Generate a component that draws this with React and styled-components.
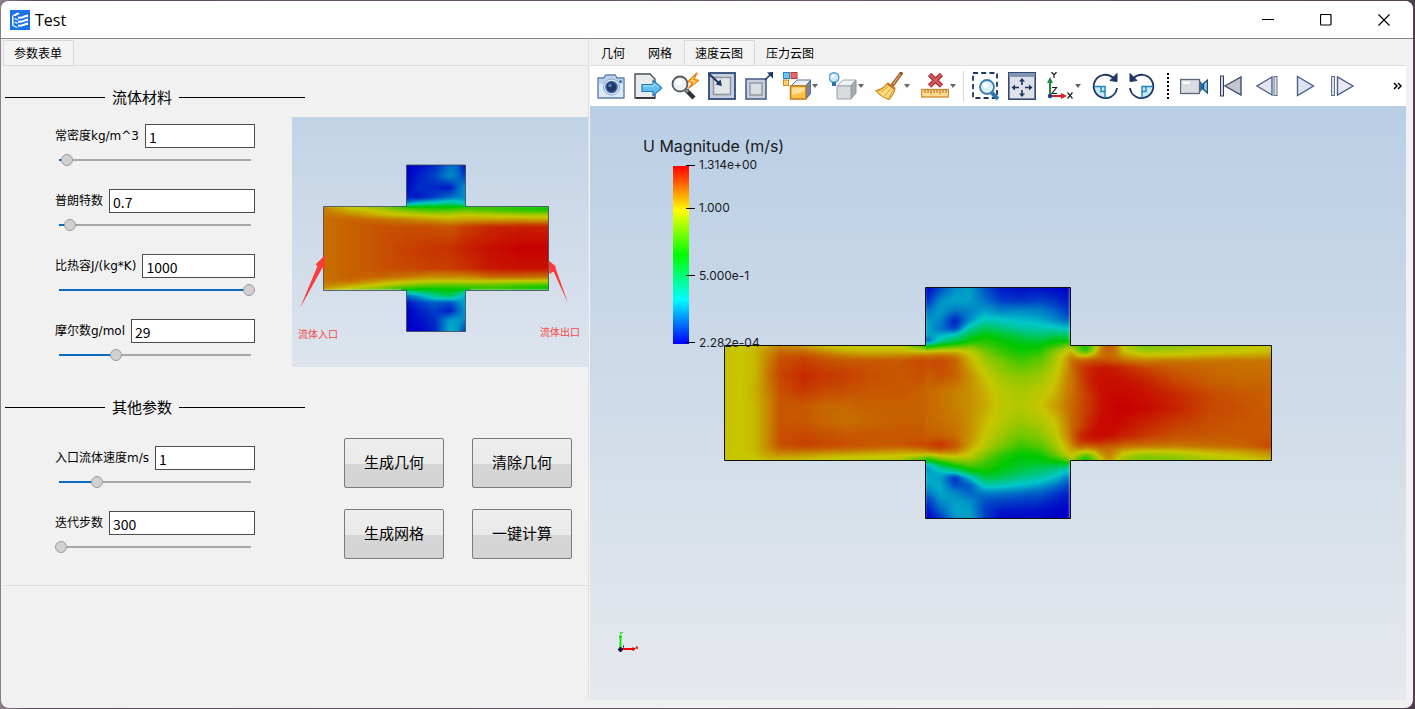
import React from "react";
import styled, { createGlobalStyle } from "styled-components";

const CJK = '"Noto Sans CJK SC", sans-serif';

const GlobalStyle = createGlobalStyle`
  *, *::before, *::after { box-sizing: border-box; }
  html, body, #root { height: 100%; }
  body { margin: 0; font: 12px/16px ${CJK}; color: #000; }
  button, input { font: inherit; color: inherit; margin: 0; }
`;

const Desktop = styled.div`
  min-height: 100%;
  display: flex;
  padding: 1px 2px 1px 1px;
  background: linear-gradient(90deg, #8d7c8c 0, #5b4a5e 30px, #6c5a6c 60%, #50404f 100%);
`;

const Window = styled.div`
  flex: 1;
  min-width: 0;
  display: flex;
  flex-direction: column;
  background: #f1f1f1;
  border-radius: 8px;
  overflow: hidden;
`;

const TitleBar = styled.header`
  display: flex;
  align-items: center;
  height: 38px;
  padding-left: 9px;
  background: #fff;
  border-bottom: 1px solid #84848c;
`;

const WindowTitle = styled.h1`
  flex: 1;
  margin: 0 0 0 5px;
  font: 400 16px/24px "Open Sans", sans-serif;
`;

const WindowButton = styled.button`
  width: 58px;
  height: 36px;
  padding: 0;
  border: 0;
  background: none;
  display: grid;
  place-items: center;
`;

const Body = styled.main`
  flex: 1;
  display: flex;
  padding: 0 7px 8px 2px;
`;

const FormColumn = styled.section`
  flex: 0 0 586px;
  min-width: 0;
  display: flex;
  flex-direction: column;
  border-right: 1px solid #e0e0e0;
`;

const ViewColumn = styled.section`
  flex: 1;
  min-width: 0;
  display: flex;
  flex-direction: column;
  padding-left: 1px;
`;

const TabList = styled.div`
  display: flex;
  height: 27px;
  padding-top: 1px;
  border-bottom: 1px solid #e0e0e0;
`;

const Tab = styled.button`
  height: 26px;
  padding: 0 11px 0 10px;
  border: 1px solid ${(p) => (p.$active ? "#d9d9d9" : "transparent")};
  background: ${(p) => (p.$active ? "#f3f3f3" : "transparent")};
  line-height: 22px;
`;

const Form = styled.form`
  border-bottom: 1px solid #e0e0e0;
  height: 520px;
`;

const SectionTitle = styled.h2`
  display: grid;
  grid-template-columns: 100px 60px 126px;
  column-gap: 7px;
  align-items: center;
  margin: 0;
  padding: ${(p) => (p.$first ? "19px" : "28px")} 0 8px 2px;
  font: 400 15px/24px ${CJK};

  &::before, &::after { content: ""; height: 1px; background: #000; }
`;

const SectionBody = styled.div`
  display: flex;
`;

const FieldList = styled.div`
  flex: 0 0 289px;
  min-width: 0;
  display: flex;
  flex-direction: column;
  gap: 21px;
  padding: ${(p) => p.$top} 37px 0 52px;
`;

const FieldRow = styled.div`
  display: flex;
  align-items: center;
  gap: 6px;
  height: 24px;
`;

const FieldLabel = styled.label`
  flex: none;
  font: 12px/24px "DejaVu Sans", ${CJK};
`;

const TextInput = styled.input`
  flex: 1;
  width: 0;
  min-width: 0;
  height: 24px;
  padding: 1px 3px 0;
  border: 1px solid #4c4c4c;
  border-radius: 0;
  background: #fff;
  font-size: 14px;
  line-height: 20px;
`;

const Slider = styled.input`
  display: block;
  appearance: none;
  width: 100%;
  height: 12px;
  margin: 6px 0 2px;
  background: linear-gradient(90deg, #0a6cc0 ${(p) => p.defaultValue}%, #a8a8a8 ${(p) => p.defaultValue}%)
    center / calc(100% - 8px) 2px no-repeat;

  &::-webkit-slider-thumb {
    appearance: none;
    width: 12px;
    height: 12px;
    border: 1px solid #9c9c9c;
    border-radius: 50%;
    background: #d0d0d0;
  }
`;

const ButtonGrid = styled.div`
  display: grid;
  grid-template-columns: 100px 100px;
  align-content: start;
  gap: 21px 28px;
  padding: 11px 0 0 52px;
`;

const PushButton = styled.button`
  height: 50px;
  padding: 0 0 2px;
  border: 1px solid #7b7b7b;
  border-radius: 2px;
  background: linear-gradient(#eeeeee, #e9e9e9 52%, #d6d6d6 52%, #d3d3d3);
  font-size: 15px;
`;

const Toolbar = styled.div`
  display: flex;
  align-items: center;
  height: 40px;
  padding: 0 4px 0 2px;
  background: #fff;
`;

const ToolButton = styled.button`
  flex: none;
  display: flex;
  align-items: center;
  justify-content: center;
  gap: 1px;
  width: ${(p) => (p.$menu ? "46px" : "37px")};
  height: 36px;
  padding: 0;
  border: 0;
  background: none;
`;

const Divider = styled.span`
  flex: none;
  width: 1px;
  height: 30px;
  margin: 0 2px;
  background: #d8d8d8;
`;

const Grip = styled.span`
  flex: none;
  height: 26px;
  margin: 0 6px 0 7px;
  border-left: 2px dotted #000;
`;

const Overflow = styled.button`
  margin-left: auto;
  padding: 0;
  border: 0;
  background: none;
  display: grid;
`;

const Viewport = styled.div`
  flex: 1;
  display: flex;
  background: linear-gradient(#b9cee5, #e6e9ed);

  > svg { display: block; width: 100%; height: 100%; }
`;

const Preview = styled.svg`
  flex: none;
  display: block;
`;

/* ---------- scalar fields: values run from 0 (slow) to 100 (fast) ---------- */

const leftArm = {
  xs: [724, 740, 755, 768, 780, 803, 825, 847, 870, 900, 922],
  rows: [
    [345, 76, 74, 76, 79, 83, 80, 76, 74, 74, 74, 58],
    [350, 76, 75, 77, 82, 86, 86, 81, 77, 76, 76, 73],
    [355, 76, 75, 77, 83, 89, 90, 87, 84, 82, 83, 85],
    [360, 76, 75, 77, 84, 90, 92, 90, 89, 89, 89, 91],
    [375, 76, 75, 77, 85, 91, 95, 93, 92, 90, 89, 90],
    [390, 76, 75, 78, 84, 90, 93, 91, 90, 89, 89, 88],
    [405, 76, 75, 77, 83, 89, 89, 87, 87, 88, 88, 88],
    [420, 76, 75, 77, 83, 89, 89, 87, 86, 87, 88, 88],
    [435, 76, 75, 77, 83, 90, 91, 90, 89, 89, 89, 89],
    [445, 76, 75, 77, 83, 90, 92, 91, 90, 89, 89, 91],
    [450, 76, 75, 77, 82, 86, 87, 86, 85, 84, 82, 84],
    [455, 76, 74, 76, 79, 81, 80, 78, 77, 76, 75, 74],
    [460, 76, 74, 74, 77, 77, 76, 74, 73, 72, 72, 55],
  ],
};

const cavity = {
  xs: [926, 940, 955, 970, 985, 1000, 1020, 1040, 1055, 1069],
  rows: [
    [288, 0, 9, 18, 20, 10, 3, 2, 2, 1, 0],
    [300, 4, 18, 21, 20, 14, 8, 6, 8, 6, 3],
    [310, 14, 20, 15, 16, 20, 16, 17, 16, 12, 6],
    [320, 20, 17, 3, 18, 28, 26, 24, 22, 18, 12],
    [328, 22, 14, 7, 30, 40, 36, 30, 28, 27, 24],
    [335, 20, 22, 28, 43, 49, 46, 40, 36, 40, 38],
    [341, 8, 30, 42, 52, 55, 51, 46, 44, 50, 50],
    [345, 40, 52, 58, 62, 58, 53, 49, 50, 55, 65],
    [350, 72, 75, 76, 73, 64, 57, 51, 53, 66, 76],
    [355, 85, 86, 84, 76, 68, 60, 54, 58, 70, 80],
    [360, 90, 91, 88, 78, 70, 65, 58, 62, 71, 82],
    [375, 88, 90, 88, 82, 75, 70, 67, 69, 74, 84],
    [390, 87, 86, 84, 82, 78, 73, 71, 73, 77, 85],
    [405, 87, 86, 84, 82, 79, 74, 72, 75, 80, 86],
    [420, 87, 86, 85, 82, 77, 73, 70, 72, 76, 85],
    [435, 88, 88, 86, 82, 75, 70, 64, 67, 73, 84],
    [445, 91, 94, 90, 80, 73, 66, 58, 61, 70, 80],
    [450, 86, 88, 86, 77, 70, 61, 53, 56, 67, 78],
    [455, 70, 76, 77, 74, 65, 56, 50, 51, 61, 74],
    [460, 46, 60, 68, 68, 60, 53, 48, 48, 52, 62],
    [465, 18, 38, 52, 60, 56, 51, 45, 42, 42, 38],
    [470, 18, 24, 34, 50, 53, 48, 41, 37, 32, 25],
    [477, 22, 20, 5, 24, 42, 40, 33, 29, 24, 15],
    [485, 20, 22, 9, 11, 28, 27, 24, 20, 15, 8],
    [492, 14, 21, 17, 12, 16, 16, 14, 12, 8, 4],
    [500, 6, 18, 20, 18, 10, 9, 8, 7, 4, 2],
    [510, 1, 12, 21, 20, 8, 3, 3, 2, 1, 0],
    [518, 0, 6, 18, 20, 8, 1, 1, 1, 0, 0],
  ],
};

const rightArm = {
  xs: [1072, 1079, 1086, 1094, 1101, 1109, 1117, 1124, 1145, 1175, 1210, 1240, 1271],
  rows: [
    [345, 68, 60, 50, 66, 84, 89, 84, 72, 63, 66, 70, 72, 75],
    [350, 76, 62, 54, 72, 84, 88, 84, 75, 69, 71, 73, 74, 76],
    [355, 82, 76, 75, 80, 86, 87, 85, 80, 76, 76, 78, 79, 80],
    [360, 86, 88, 89, 90, 90, 89, 88, 86, 84, 85, 85, 86, 85],
    [367, 86, 91, 94, 96, 97, 97, 96, 95, 91, 88, 87, 86, 86],
    [380, 85, 90, 94, 97, 98, 98, 98, 98, 96, 91, 88, 87, 87],
    [395, 86, 89, 92, 95, 98, 99, 99, 99, 98, 95, 91, 89, 88],
    [408, 87, 90, 92, 95, 98, 99, 100, 100, 99, 96, 91, 90, 88],
    [425, 87, 90, 94, 97, 99, 99, 99, 98, 95, 92, 90, 89, 89],
    [435, 87, 94, 97, 99, 99, 99, 97, 96, 93, 90, 89, 89, 89],
    [440, 86, 92, 95, 96, 96, 95, 94, 92, 90, 88, 88, 88, 90],
    [446, 82, 88, 87, 88, 89, 88, 87, 86, 85, 84, 86, 87, 91],
    [451, 78, 77, 75, 77, 84, 85, 82, 77, 74, 75, 78, 80, 84],
    [456, 75, 66, 58, 68, 78, 84, 78, 72, 66, 68, 73, 76, 80],
    [460, 72, 56, 48, 62, 74, 82, 74, 67, 64, 66, 70, 73, 77],
  ],
};

const previewDuct = {
  xs: [323, 350, 380, 406, 430, 450, 466, 490, 520, 548],
  rows: [
    [206, 84, 74, 66, 52, 49, 48, 52, 55, 52, 51],
    [210, 85, 78, 74, 66, 60, 60, 64, 60, 56, 54],
    [214, 86, 83, 77, 74, 72, 72, 74, 72, 70, 70],
    [219, 86, 88, 86, 84, 81, 79, 80, 80, 80, 79],
    [226, 86, 88, 90, 90, 90, 89, 92, 95, 96, 96],
    [248, 86, 88, 90, 92, 93, 94, 96, 98, 100, 100],
    [268, 86, 88, 90, 91, 92, 92, 94, 97, 98, 98],
    [277, 86, 88, 87, 85, 82, 82, 82, 86, 86, 85],
    [281, 86, 86, 80, 76, 74, 74, 75, 74, 73, 73],
    [285, 84, 79, 74, 66, 62, 60, 60, 62, 58, 56],
    [290, 80, 70, 60, 48, 45, 48, 50, 52, 50, 44],
  ],
};

const previewTop = {
  xs: [406, 420, 435, 450, 458, 466],
  rows: [
    [165, 0, 2, 5, 14, 12, 0],
    [175, 0, 4, 9, 18, 14, 6],
    [187, 1, 6, 5, 3, 12, 20],
    [197, 4, 3, 8, 14, 16, 18],
    [202, 14, 22, 26, 30, 28, 22],
    [206, 36, 42, 45, 48, 45, 36],
  ],
};

const previewBottom = {
  xs: [406, 420, 435, 450, 458, 466],
  rows: [
    [290, 35, 42, 46, 50, 47, 36],
    [295, 14, 22, 34, 40, 30, 20],
    [302, 2, 8, 12, 10, 16, 22],
    [310, 0, 4, 8, 3, 12, 20],
    [320, 0, 2, 6, 20, 20, 16],
    [332, 0, 0, 4, 23, 18, 4],
  ],
};

const BLEED = 4;

function valuesAt(rows, y) {
  const last = rows[rows.length - 1];
  if (y <= rows[0][0]) return rows[0].slice(1);
  if (y >= last[0]) return last.slice(1);
  const i = rows.findIndex((r) => r[0] > y);
  const [y0, ...a] = rows[i - 1];
  const [y1, ...b] = rows[i];
  const t = (y - y0) / (y1 - y0);
  return a.map((v, k) => v + (b[k] - v) * t);
}

/* Horizontal grey strips; the speedColours filter turns grey into the rainbow scale. */
function ScalarField({ id, field, top = BLEED, bottom = BLEED, side = BLEED }) {
  const { xs, rows } = field;
  const x0 = xs[0] - side;
  const x1 = xs[xs.length - 1] + side;
  const strips = [];
  for (let y = rows[0][0] - top; y < rows[rows.length - 1][0] + bottom; y += 1) strips.push(y);
  return strips.map((y) => (
    <g key={y}>
      <linearGradient id={`${id}${y}`} gradientUnits="userSpaceOnUse" x1={xs[0]} x2={xs[xs.length - 1]} y1="0" y2="0">
        {valuesAt(rows, y).map((v, k) => {
          const g = Math.round(v * 2.55);
          return (
            <stop
              key={k}
              offset={(xs[k] - xs[0]) / (xs[xs.length - 1] - xs[0])}
              stopColor={`rgb(${g},${g},${g})`}
            />
          );
        })}
      </linearGradient>
      <rect x={x0} y={y} width={x1 - x0} height="1" fill={`url(#${id}${y})`} shapeRendering="crispEdges" />
    </g>
  ));
}

function SpeedColours({ id, x, y, width, height, blur }) {
  return (
    <filter id={id} filterUnits="userSpaceOnUse" x={x} y={y} width={width} height={height} colorInterpolationFilters="sRGB">
      <feGaussianBlur stdDeviation={blur} />
      <feComponentTransfer>
        <feFuncR type="table" tableValues="0 0 0 .784 .784" />
        <feFuncG type="table" tableValues="0 .784 .784 .784 0" />
        <feFuncB type="table" tableValues=".784 .784 0 0 0" />
      </feComponentTransfer>
    </filter>
  );
}

const CROSS = "M724.5 345.5H925.5V287.5H1070.5V345.5H1271.5V460.5H1070.5V518.5H925.5V460.5H724.5Z";
const PREVIEW_CROSS = "M323.5 206.5H406.5V165H465.5V206.5H548.5V290.5H465.5V331.5H406.5V290.5H323.5Z";

function ContourScene() {
  const ticks = [[166, "1.314e+00", 169], [209, "1.000", 212], [276, "5.000e-1", 280], [343, "2.282e-04", 347]];
  return (
    <svg viewBox="590 106 816 594" role="img" aria-label="速度云图">
      <defs>
        <SpeedColours id="sceneColours" x={710} y={275} width={580} height={255} blur={1.6} />
        <clipPath id="sceneClip"><path d={CROSS} /></clipPath>
        <linearGradient id="scale" x1="0" x2="0" y1="1" y2="0">
          <stop offset="0" stopColor="#00f" />
          <stop offset=".25" stopColor="#0ff" />
          <stop offset=".5" stopColor="#0f0" />
          <stop offset=".75" stopColor="#ff0" />
          <stop offset="1" stopColor="#f00" />
        </linearGradient>
      </defs>
      <g clipPath="url(#sceneClip)">
        <g filter="url(#sceneColours)">
          <ScalarField id="l" field={leftArm} />
          <ScalarField id="r" field={rightArm} />
          <ScalarField id="c" field={cavity} side={1} />
        </g>
      </g>
      <path d={CROSS} fill="none" stroke="#111" />
      <rect x="673" y="166" width="16" height="178" fill="url(#scale)" />
      <g fill="#1a1a1a" fontFamily="Inter, sans-serif">
        <text x="643" y="152" fontSize="16">U Magnitude (m/s)</text>
        {ticks.map(([y, label, base]) => (
          <g key={label}>
            <rect x="686" y={y - 1} width="9" height="1" fill="#000" />
            <text x="699" y={base} fontSize="12">{label}</text>
          </g>
        ))}
      </g>
      <path d="M620.5 649V635" stroke="#00f000" strokeWidth="2" />
      <path d="M619 637h3M620 632l1 2l2 -2" stroke="#00c800" fill="none" />
      <path d="M621 649H635" stroke="#f00" strokeWidth="2" />
      <path d="M633 647v4M635 648h3M637 646v3" stroke="#d00000" fill="none" />
      <path d="M618 649.5h5M620.5 647v5M623 646.5h1" stroke="#00004c" strokeWidth="2" />
    </svg>
  );
}

function FlowPreview() {
  return (
    <Preview width="296" height="250" viewBox="292 117 296 250" role="img" aria-label="流体入口与流体出口">
      <defs>
        <SpeedColours id="previewColours" x={315} y={155} width={245} height={185} blur={1.2} />
        <clipPath id="previewClip"><path d={PREVIEW_CROSS} /></clipPath>
        <linearGradient id="previewSky" x1="0" x2="0" y1="0" y2="1">
          <stop offset="0" stopColor="#c2d3e6" />
          <stop offset="1" stopColor="#dde4ed" />
        </linearGradient>
      </defs>
      <rect x="292" y="117" width="296" height="250" fill="url(#previewSky)" />
      <g clipPath="url(#previewClip)">
        <g filter="url(#previewColours)">
          <ScalarField id="pt" field={previewTop} bottom={0} />
          <ScalarField id="pb" field={previewBottom} top={0} />
          <ScalarField id="pd" field={previewDuct} top={0} bottom={0} />
        </g>
      </g>
      <path d={PREVIEW_CROSS} fill="none" stroke="#3c4650" strokeOpacity=".8" />
      <path d="M300 308L317.500 266L315.500 264.500L325 255V269L322.500 267.500Z" fill="#fb3a3a" />
      <path d="M568 303L553.500 271.500L549.500 274L548.500 260.500L555.500 266L555.500 268Z" fill="#fb3a3a" />
      <g fill="#f44848" fontSize="10" fontFamily="Noto Sans CJK SC, sans-serif">
        <text x="298" y="338">流体入口</text>
        <text x="540" y="336">流体出口</text>
      </g>
    </Preview>
  );
}

/* ---------- icons ---------- */

const NAVY = "#1c3562";

const icons = {
  camera: (
    <>
      <path d="M1 6h6l2-3h9l2 3h7v20H1z" fill="#dce9f7" stroke="#5a7fae" strokeWidth="1.400" strokeLinejoin="round" />
      <path d="M2 7h6l2-3h7l2 3h7v5H2z" fill="#b9d0ea" />
      <circle cx="14.500" cy="15" r="8" fill="#e8f0f9" stroke="#8aa6c9" />
      <circle cx="14.500" cy="15" r="5.600" fill="#1d3768" stroke="#3f6da5" strokeWidth="1.500" />
      <circle cx="13" cy="13.500" r="1.800" fill="#5f83b4" />
      <rect x="22.500" y="8.500" width="2" height="2" fill={NAVY} />
    </>
  ),
  exportScene: (
    <>
      <path d="M1 2h15l5 5v19H1z" fill="#e9ebed" stroke="#4b4f55" strokeWidth="1.400" />
      <path d="M2 26h19" stroke="#26282b" strokeWidth="1.600" />
      <path d="M8 12.500h11V8.500l9 7.500l-9 7.500v-4H8z" fill="#63bff0" stroke="#1c7ab9" strokeWidth="1.200" />
      <path d="M9 14h11v-2.500l5 4" fill="none" stroke="#b4e4fb" />
    </>
  ),
  magnifyFlash: (
    <>
      <path d="M15 18l8 8" stroke="#303236" strokeWidth="4.500" />
      <path d="M14 17l3 3" stroke="#8b9096" strokeWidth="2.500" />
      <circle cx="9" cy="12" r="7.500" fill="#eef1f3" stroke="#55595e" strokeWidth="1.800" />
      <circle cx="8" cy="10" r="3" fill="#fff" />
      <path d="M26 1l-9 8.500l4.500 .8l-4 6l10.500-8l-5-.8z" fill="#ffd36a" stroke="#ef7f10" strokeWidth="1.300" strokeLinejoin="round" />
    </>
  ),
  zoomIn: (
    <>
      <rect x="1" y="1" width="26" height="26" fill="#c5cfdd" stroke="#2f4a78" strokeWidth="1.800" />
      <rect x="5.500" y="5.500" width="17" height="17" fill="#e4e6e9" stroke="#9199a5" strokeWidth="1.600" />
      <path d="M1 2l11 10" stroke={NAVY} strokeWidth="2" />
      <path d="M14 14l-6.500-1.500l5-5z" fill={NAVY} />
    </>
  ),
  zoomOut: (
    <>
      <rect x="1" y="7" width="20" height="20" fill="#c8d0dc" stroke="#4a628c" strokeWidth="1.600" />
      <rect x="5" y="11" width="12" height="12" fill="#dcdfe3" stroke="#9199a5" strokeWidth="1.500" />
      <path d="M20 8l5-5" stroke={NAVY} strokeWidth="1.600" />
      <path d="M28 0v6.500l-6-6z" fill={NAVY} />
    </>
  ),
  colorCube: (
    <>
      <rect x="0.500" y="0.500" width="6" height="6" fill="#6cc4f0" stroke="#2b86bd" />
      <rect x="8" y="0.500" width="6" height="6" fill="#e06a6a" stroke="#b73a3f" />
      <rect x="0.500" y="8" width="5" height="5.500" fill="#ffd27a" stroke="#d98714" />
      <path d="M8 14l6-6h14l-5 6z" fill="#eef2f6" stroke="#5c7090" />
      <path d="M23 14l5-6v13l-5 6z" fill="#7387a5" stroke="#4b5f80" />
      <path d="M7.500 14H23v13H7.500z" fill="#fbc04b" stroke="#c67714" strokeWidth="1.400" />
      <path d="M9 15.500h12.500v4L9 23z" fill="#ffdf95" />
    </>
  ),
  lightCube: (
    <>
      <path d="M8 14l6-6h13l-5 6z" fill="#eef0f2" stroke="#a2abb5" />
      <path d="M22 14l5-6v13l-5 6z" fill="#a3abb5" stroke="#8a939e" />
      <path d="M8 14h14v13H8z" fill="#d7dbe0" stroke="#98a1ac" />
      <circle cx="5" cy="5.500" r="4.800" fill="#cdeafb" stroke="#4b9fd2" strokeWidth="1.400" />
      <path d="M3 10h4v4H3z" fill="#2e6f9f" />
      <circle cx="4" cy="4" r="1.500" fill="#fff" />
    </>
  ),
  broom: (
    <>
      <path d="M26 1.500l-8 11" stroke="#8c4a1e" strokeWidth="3.600" strokeLinecap="round" />
      <path d="M25.500 2l-7.500 10.500" stroke="#d99a5c" strokeWidth="1.600" />
      <path d="M13 11l7 5c0 4-3 8-6 11.500C9 26 4 22.500 1 18.500c5 0 8-3 12-7.500z" fill="#fcdc7c" stroke="#d08a1c" strokeWidth="1.200" />
      <path d="M13 15l-7 5M15.500 17l-6 7M18 18l-4 8" stroke="#dd9c2c" />
      <path d="M12.500 12l7 5" stroke="#c9692a" strokeWidth="1.600" />
    </>
  ),
  rulerDelete: (
    <>
      <rect x="0.500" y="17.500" width="27" height="7.500" fill="#ffd991" stroke="#cc8a2d" strokeWidth="1.300" />
      <path d="M4 18v3M7 18v3M10 18v4M13 18v3M16 18v3M19 18v4M22 18v3M25 18v3" stroke="#a8691c" />
      <path d="M8.500 2.500L20.500 14M20.500 2.500L8.500 14" stroke="#a02c34" strokeWidth="4.600" />
      <path d="M8.500 2.500L20.500 14M20.500 2.500L8.500 14" stroke="#d95a60" strokeWidth="2.400" />
    </>
  ),
  zoomBox: (
    <>
      <rect x="2" y="1" width="24" height="25" fill="none" stroke={NAVY} strokeWidth="1.800" strokeDasharray="5 3.200" />
      <path d="M20 20l7 7" stroke="#2c78ad" strokeWidth="4" />
      <circle cx="16" cy="15" r="7" fill="#d9effb" stroke="#3a7cab" strokeWidth="1.800" />
      <circle cx="14.500" cy="13" r="3" fill="#f6fcff" />
    </>
  ),
  fit: (
    <>
      <rect x="0.800" y="0.800" width="26.400" height="26.400" fill="#dde2ea" stroke="#34496f" strokeWidth="1.600" />
      <rect x="1" y="1" width="26" height="4" fill="#8294b3" />
      <path d="M14 8v5M14 18v5M5 15.500h6M17 15.500h6" stroke={NAVY} strokeWidth="1.600" />
      <path d="M14 6l3 3.500h-6zM14 25l3-3.500h-6zM3.500 15.500l3.500-3v6zM24.500 15.500l-3.500-3v6z" fill={NAVY} />
    </>
  ),
  axes: (
    <>
      <path d="M4 24V9" stroke="#238a3d" strokeWidth="2" />
      <path d="M4 5l3 6H1z" fill="#238a3d" />
      <path d="M4 24h12" stroke="#e02020" strokeWidth="2" />
      <path d="M21 24l-6-3v6z" fill="#e02020" />
      <circle cx="4" cy="24" r="2.200" fill="#1b3ba0" />
      <g fill="none" stroke="#222" strokeWidth="1.200">
        <path d="M5.500 0l2.500 3l2.500-3M8 3v3M6 15.500h4.500l-4.500 6h5M21.500 20.500l5 6M26.500 20.500l-5 6" />
      </g>
    </>
  ),
  rotateRight: (
    <>
      <path d="M14 14.500V26A11.500 11.500 0 0 1 3 14.500z" fill="#c8ebfb" />
      <path d="M22.500 6A11.700 11.700 0 1 0 26 16" fill="none" stroke={NAVY} strokeWidth="1.800" />
      <path d="M19 8.500L26 1.500V9.500z" fill={NAVY} stroke={NAVY} />
      <path d="M3 14.500h11V26M10 14.500v5h4" fill="none" stroke="#2387ba" strokeWidth="1.500" />
    </>
  ),
  rotateLeft: (
    <>
      <path d="M14 14.500V26A11.500 11.500 0 0 0 25 14.500z" fill="#c8ebfb" />
      <path d="M5.500 6A11.700 11.700 0 1 1 2 16" fill="none" stroke={NAVY} strokeWidth="1.800" />
      <path d="M9 8.500L2 1.500V9.500z" fill={NAVY} stroke={NAVY} />
      <path d="M25 14.500H14V26M18 14.500v5h-4" fill="none" stroke="#2387ba" strokeWidth="1.500" />
    </>
  ),
  video: (
    <>
      <rect x="0.500" y="7.500" width="19" height="14" fill="#d9dde3" stroke="#5b6679" strokeWidth="1.300" />
      <rect x="3" y="9.500" width="7" height="2.500" fill="#fff" />
      <path d="M20 9l3 3v5l-3 3z" fill="#2b6f9e" />
      <path d="M23.500 11.500l4-3.500v13l-4-3.500z" fill="#8fd0ef" stroke="#1d4f7a" strokeWidth="1.400" />
    </>
  ),
  first: (
    <>
      <rect x="3.500" y="4" width="3" height="20" fill="#d3d9e3" stroke="#2f3f63" />
      <path d="M24 5v18L8 14z" fill="#c3c7cd" stroke="#3f4f73" strokeWidth="1.400" />
    </>
  ),
  previous: (
    <>
      <path d="M18 5v18L3 14z" fill="#e3e7ed" stroke="#4f6286" strokeWidth="1.400" />
      <rect x="20" y="4.500" width="3" height="19" fill="#d9e1ea" stroke="#5f7192" />
    </>
  ),
  play: <path d="M6.500 4.500L22.500 14L6.500 23.500z" fill="#dce4f1" stroke="#4a5f8d" strokeWidth="1.400" />,
  next: (
    <>
      <rect x="3.500" y="4.500" width="3" height="19" fill="#d9e1ea" stroke="#5f7192" />
      <path d="M9.500 5v18L25 14z" fill="#e6eaf1" stroke="#4a5f8d" strokeWidth="1.400" />
    </>
  ),
};

function Tool({ icon, label, menu }) {
  return (
    <ToolButton type="button" aria-label={label} $menu={menu}>
      <svg width="28" height="28" viewBox="0 0 28 28" aria-hidden="true">{icons[icon]}</svg>
      {menu && (
        <svg width="6" height="4" viewBox="0 0 6 4" aria-hidden="true">
          <path d="M0 0h6L3 4z" fill="#666" />
        </svg>
      )}
    </ToolButton>
  );
}

function Logo() {
  return (
    <svg width="20" height="20" viewBox="0 0 20 20" aria-hidden="true">
      <rect width="20" height="20" fill="#1a73e8" />
      <path d="M2 5.500L7.500 2.500L10 3.500L5.500 6zM2 6l1.500 .600v10L2 15.500z" fill="#fff" />
      <path d="M4.500 8l3 1v1.500L4.500 9.500zM4.500 11.500l3 1V14l-3-1zM3.500 15l4 2v1.200L3.500 16.500z" fill="#e6f1ff" />
      <path d="M8 6.500c4 1 6-1.500 10-2v2.500c-4 0-6 2.500-10 1.700zM8 10.500c4 1 6-1.500 10-2v2.500c-4 0-6 2.500-10 1.700zM8 14.500c4 1 6-1.500 10-2v2.500c-4 0-6 2.500-10 1.700z" fill="#fff" />
    </svg>
  );
}

function ParameterField({ id, label, value, position }) {
  return (
    <div>
      <FieldRow>
        <FieldLabel htmlFor={id}>{label}</FieldLabel>
        <TextInput id={id} type="text" defaultValue={value} />
      </FieldRow>
      <Slider type="range" min="0" max="100" defaultValue={position} aria-label={label} />
    </div>
  );
}

const materialFields = [
  { id: "density", label: "常密度kg/m^3", value: "1", position: 3 },
  { id: "prandtl", label: "普朗特数", value: "0.7", position: 5 },
  { id: "heat", label: "比热容J/(kg*K)", value: "1000", position: 100 },
  { id: "molar", label: "摩尔数g/mol", value: "29", position: 29 },
];

const otherFields = [
  { id: "inlet", label: "入口流体速度m/s", value: "1", position: 19 },
  { id: "steps", label: "迭代步数", value: "300", position: 0 },
];

export default function App() {
  return (
    <>
      <GlobalStyle />
      <Desktop>
        <Window>
          <TitleBar>
            <Logo />
            <WindowTitle>Test</WindowTitle>
            <WindowButton type="button" aria-label="最小化">
              <svg width="12" height="12"><path d="M0 5.500h12" stroke="#000" /></svg>
            </WindowButton>
            <WindowButton type="button" aria-label="最大化">
              <svg width="12" height="12"><rect x="0.500" y="0.500" width="10.500" height="10.500" rx="1" fill="none" stroke="#000" strokeWidth="1.200" /></svg>
            </WindowButton>
            <WindowButton type="button" aria-label="关闭">
              <svg width="12" height="12"><path d="M0.500 0.500l11 11M11.500 0.500l-11 11" stroke="#000" strokeWidth="1.200" /></svg>
            </WindowButton>
          </TitleBar>
          <Body>
            <FormColumn>
              <TabList role="tablist">
                <Tab type="button" role="tab" aria-selected="true" $active>参数表单</Tab>
              </TabList>
              <Form>
                <SectionTitle $first>流体材料</SectionTitle>
                <SectionBody>
                  <FieldList $top="7px">
                    {materialFields.map((f) => <ParameterField key={f.id} {...f} />)}
                  </FieldList>
                  <FlowPreview />
                </SectionBody>
                <SectionTitle>其他参数</SectionTitle>
                <SectionBody>
                  <FieldList $top="19px">
                    {otherFields.map((f) => <ParameterField key={f.id} {...f} />)}
                  </FieldList>
                  <ButtonGrid>
                    <PushButton type="button">生成几何</PushButton>
                    <PushButton type="button">清除几何</PushButton>
                    <PushButton type="button">生成网格</PushButton>
                    <PushButton type="button">一键计算</PushButton>
                  </ButtonGrid>
                </SectionBody>
              </Form>
            </FormColumn>
            <ViewColumn>
              <TabList role="tablist">
                <Tab type="button" role="tab" aria-selected="false">几何</Tab>
                <Tab type="button" role="tab" aria-selected="false">网格</Tab>
                <Tab type="button" role="tab" aria-selected="true" $active>速度云图</Tab>
                <Tab type="button" role="tab" aria-selected="false">压力云图</Tab>
              </TabList>
              <Toolbar role="toolbar">
                <Tool icon="camera" label="截图" />
                <Tool icon="exportScene" label="导出场景" />
                <Tool icon="magnifyFlash" label="缩放到数据" />
                <Tool icon="zoomIn" label="缩小视图" />
                <Tool icon="zoomOut" label="放大视图" />
                <Tool icon="colorCube" label="颜色" menu />
                <Tool icon="lightCube" label="灯光" menu />
                <Tool icon="broom" label="清理" menu />
                <Tool icon="rulerDelete" label="删除标尺" menu />
                <Divider />
                <Tool icon="zoomBox" label="框选缩放" />
                <Tool icon="fit" label="适应窗口" />
                <Tool icon="axes" label="坐标轴" menu />
                <Tool icon="rotateRight" label="顺时针旋转" />
                <Tool icon="rotateLeft" label="逆时针旋转" />
                <Grip />
                <Tool icon="video" label="录制" />
                <Tool icon="first" label="第一帧" />
                <Tool icon="previous" label="上一帧" />
                <Tool icon="play" label="播放" />
                <Tool icon="next" label="下一帧" />
                <Overflow type="button" aria-label="更多">
                  <svg width="9" height="8"><path d="M1 1l3 3l-3 3M5 1l3 3l-3 3" fill="none" stroke="#000" strokeWidth="1.500" /></svg>
                </Overflow>
              </Toolbar>
              <Viewport>
                <ContourScene />
              </Viewport>
            </ViewColumn>
          </Body>
        </Window>
      </Desktop>
    </>
  );
}
